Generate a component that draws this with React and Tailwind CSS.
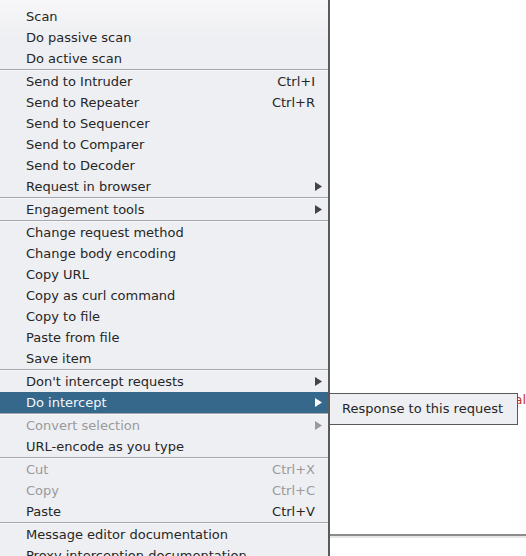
const groups = [
    [
        { label: "Scan" },
        { label: "Do passive scan" },
        { label: "Do active scan" },
    ],
    [
        { label: "Send to Intruder", shortcut: "Ctrl+I" },
        { label: "Send to Repeater", shortcut: "Ctrl+R" },
        { label: "Send to Sequencer" },
        { label: "Send to Comparer" },
        { label: "Send to Decoder" },
        { label: "Request in browser", sub: true },
    ],
    [{ label: "Engagement tools", sub: true }],
    [
        { label: "Change request method" },
        { label: "Change body encoding" },
        { label: "Copy URL" },
        { label: "Copy as curl command" },
        { label: "Copy to file" },
        { label: "Paste from file" },
        { label: "Save item" },
    ],
    [
        { label: "Don't intercept requests", sub: true },
        { label: "Do intercept", sub: true, active: true },
    ],
    [
        { label: "Convert selection", sub: true, disabled: true },
        { label: "URL-encode as you type" },
    ],
    [
        { label: "Cut", shortcut: "Ctrl+X", disabled: true },
        { label: "Copy", shortcut: "Ctrl+C", disabled: true },
        { label: "Paste", shortcut: "Ctrl+V" },
    ],
    [
        { label: "Message editor documentation" },
        { label: "Proxy interception documentation" },
    ],
];

function Arrow({ color }) {
    return (
        <svg width="7" height="9" viewBox="0 0 7 9" className="shrink-0">
            <path d="M0 0 L7 4.5 L0 9 Z" fill={color} />
        </svg>
    );
}

function MenuItem({ item }) {
    const textColor = item.active
        ? "text-[#f4f6fa]"
        : item.disabled
        ? "text-[#9a9a9c]"
        : "text-[#262626]";
    const arrowColor = item.active ? "#ffffff" : item.disabled ? "#9a9a9c" : "#444444";
    return (
        <div
            className={`h-[21px] flex items-center pl-[26px] pr-[13px] ${textColor} ${
                item.active ? "bg-[#36688c]" : ""
            }`}
        >
            <span className="flex-1 whitespace-nowrap">{item.label}</span>
            {item.shortcut && <span className="whitespace-nowrap">{item.shortcut}</span>}
            {item.sub && (
                <span className="mr-[-7px]">
                    <Arrow color={arrowColor} />
                </span>
            )}
        </div>
    );
}

export default function App() {
    return (
        <div
            className="relative w-[526px] h-[556px] overflow-hidden bg-white flex text-[13px]"
            style={{ fontFamily: '"DejaVu Sans", "Liberation Sans", sans-serif' }}
        >
            <div className="w-[330px] shrink-0 h-full border-r-2 border-[#5a5a5a] bg-gradient-to-b from-[#f7f7f9] to-[#eeeff2] to-[40px] pt-[6px]">
                {groups.map((group, gi) => (
                    <div key={gi}>
                        {gi > 0 && <div className="h-[2px] border-t border-[#a4a7ae] bg-[#f7f7f9]" />}
                        {group.map((item) => (
                            <MenuItem key={item.label} item={item} />
                        ))}
                    </div>
                ))}
            </div>

            <div className="flex-1 flex flex-col">
                <div className="h-[534px]" />
                <div className="h-[2px] bg-[#8c8c8c]" />
                <div className="h-[2px] bg-[#e6e6e6]" />
            </div>

            <span className="absolute right-0 top-[390px] whitespace-nowrap text-[#333]">
                held for <span className="text-[#c0392b]">manual</span>
            </span>

            <div className="absolute left-[329px] top-[393px] w-[189px] h-[32px] border border-[#5a5a5a] bg-[#eeeff2] flex items-center pl-[12px] text-[#262626] whitespace-nowrap">
                Response to this request
            </div>
        </div>
    );
}
